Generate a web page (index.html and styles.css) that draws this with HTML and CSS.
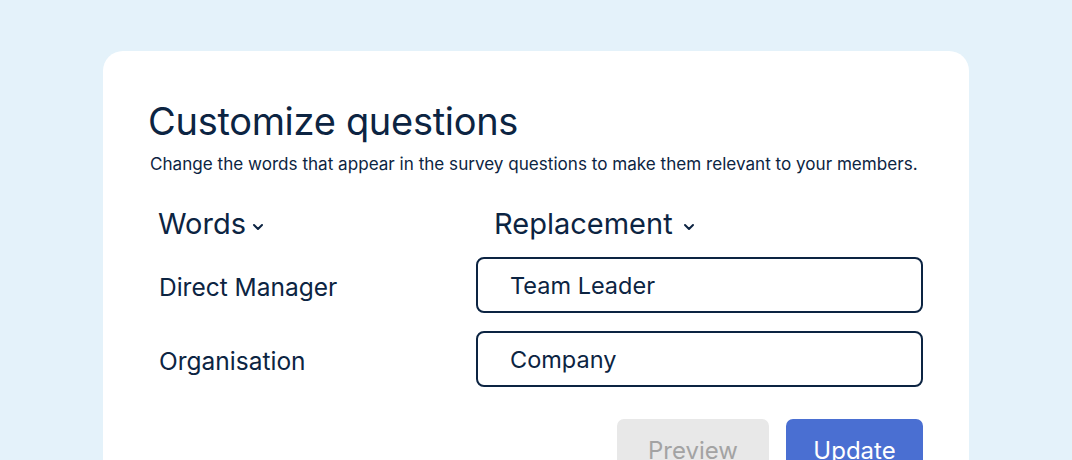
FILE: index.html
```html
<!DOCTYPE html>
<html lang="en">
<head>
<meta charset="UTF-8">
<title>Customize questions</title>
<link rel="stylesheet" href="styles.css">
</head>
<body>

<div class="card">
    <h1>Customize questions</h1>
    <p class="lead">Change the words that appear in the survey questions to make them relevant to your members.</p>

    <div class="table">
        <div class="head words">Words
            <svg class="chev" width="12" height="8" viewBox="0 0 12 8"><path d="M2 2l4 4 4-4" fill="none" stroke="currentColor" stroke-width="2" stroke-linecap="round" stroke-linejoin="round"/></svg>
        </div>
        <div class="head repl">Replacement
            <svg class="chev" width="12" height="8" viewBox="0 0 12 8"><path d="M2 2l4 4 4-4" fill="none" stroke="currentColor" stroke-width="2" stroke-linecap="round" stroke-linejoin="round"/></svg>
        </div>

        <div class="word">Direct Manager</div>
        <input class="field" type="text" value="Team Leader">

        <div class="word">Organisation</div>
        <input class="field" type="text" value="Company">
    </div>

    <div class="actions">
        <button class="btn preview" disabled>Preview</button>
        <button class="btn update">Update</button>
    </div>
</div>

</body>
</html>
```

FILE: styles.css
```css
:root {
    --bg: #e4f2fa;
    --navy: #0c2442;
    --blue: #4a6fd2;
}

body {
    background: var(--bg);
    color: var(--navy);
    font-family: 'Inter', sans-serif;
    margin: 0;
    padding: 51px 0 0 103px;
    height: 460px;
    box-sizing: border-box;
    overflow: hidden;
}

.card {
    width: 866px;
    height: 409px;
    box-sizing: border-box;
    background: #fff;
    border-radius: 20px 20px 0 0;
    padding: 44px 46px 0 45px;
}

h1 {
    font-size: 38px;
    font-weight: 400;
    margin: 0;
    line-height: 52px;
    letter-spacing: -0.3px;
}

.lead {
    font-size: 17.1px;
    margin: 6px 0 0 2px;
    line-height: 22px;
}

.table {
    display: grid;
    grid-template-columns: 328px 1fr;
    row-gap: 18px;
    margin-top: 29px;
}

.head {
    font-size: 29px;
    line-height: 40px;
    margin-bottom: -5px;
    display: flex;
    align-items: center;
    gap: 7px;
}

.words {
    padding-left: 10px;
    gap: 6px;
}

.repl {
    padding-left: 18px;
    gap: 10px;
}

.chev {
    margin-top: 6px;
}

.word {
    font-size: 24.5px;
    padding: 4px 0 0 11px;
    display: flex;
    align-items: center;
}

.field {
    height: 56px;
    box-sizing: border-box;
    border: 2.5px solid var(--navy);
    border-radius: 8px;
    padding: 0 32px;
    font-family: 'Inter', sans-serif;
    font-size: 23.5px;
    color: var(--navy);
    outline: none;
}

.actions {
    display: flex;
    justify-content: flex-end;
    gap: 17px;
    margin-top: 32px;
}

.btn {
    height: 56px;
    border: none;
    border-radius: 7px;
    font-family: 'Inter', sans-serif;
    font-size: 24px;
    padding: 6px 0 0;
}

.preview {
    background: #e8e8e8;
    color: #a3a3a3;
    width: 152px;
}

.update {
    background: var(--blue);
    color: #fff;
    width: 137px;
}
```
